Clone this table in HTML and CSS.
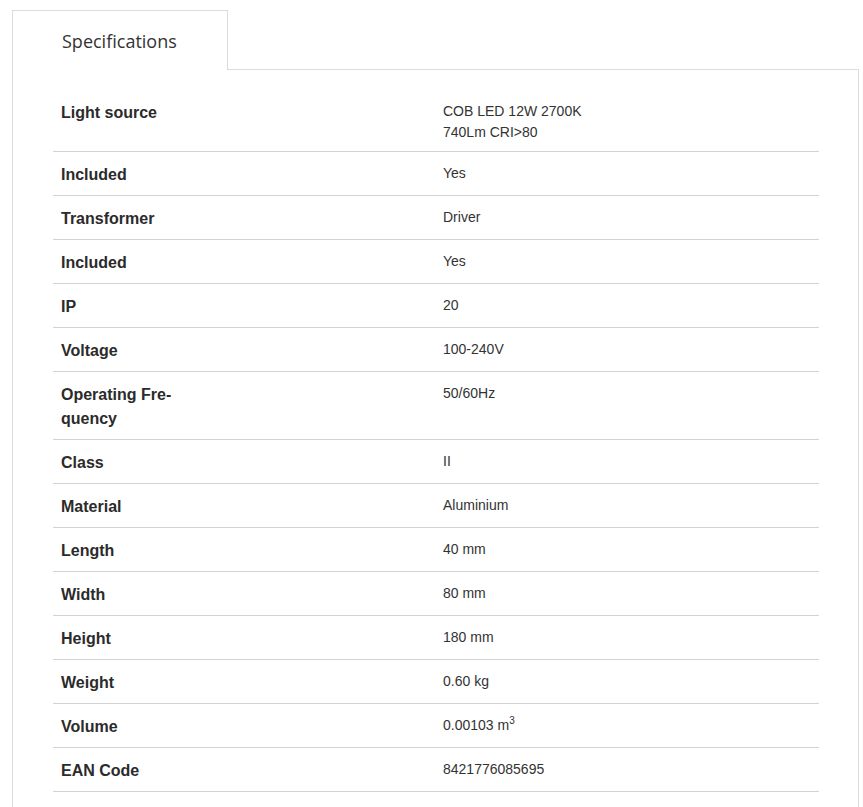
FILE: index.html
```html
<!DOCTYPE html>
<html lang="en">
<head>
<meta charset="utf-8">
<title>Specifications</title>
<link rel="stylesheet" href="styles.css">
</head>
<body>
<div class="tabs">
  <div class="tab-row">
    <div class="tab">Specifications</div>
    <div class="tab-fill"></div>
  </div>
  <div class="panel">
    <table class="specs">
      <tr><th>Light source</th><td>COB LED 12W 2700K<br>740Lm CRI&gt;80</td></tr>
      <tr><th>Included</th><td>Yes</td></tr>
      <tr><th>Transformer</th><td>Driver</td></tr>
      <tr><th>Included</th><td>Yes</td></tr>
      <tr><th>IP</th><td>20</td></tr>
      <tr><th>Voltage</th><td>100-240V</td></tr>
      <tr><th><span class="lbl">Operating Fre&shy;quency</span></th><td>50/60Hz</td></tr>
      <tr><th>Class</th><td>II</td></tr>
      <tr><th>Material</th><td>Aluminium</td></tr>
      <tr><th>Length</th><td>40 mm</td></tr>
      <tr><th>Width</th><td>80 mm</td></tr>
      <tr><th>Height</th><td>180 mm</td></tr>
      <tr><th>Weight</th><td>0.60 kg</td></tr>
      <tr><th>Volume</th><td>0.00103 m<sup>3</sup></td></tr>
      <tr><th>EAN Code</th><td>8421776085695</td></tr>
    </table>
  </div>
</div>
</body>
</html>
```

FILE: styles.css
```css
html, body {
  margin: 0;
  padding: 0;
  background: #fff;
}

.tabs {
  margin: 10px 0 0 12px;
  width: 847px;
}

.tab-row {
  display: flex;
  height: 60px;
}

.tab {
  box-sizing: border-box;
  width: 216px;
  height: 60px;
  border: 1px solid #dcdcdc;
  border-bottom: none;
  padding: 18px 0 0 49px;
  font-family: "Open Sans", "Liberation Sans", sans-serif;
  font-size: 18px;
  line-height: 24px;
  color: #333;
}

.tab-fill {
  flex: 1;
  border-bottom: 1px solid #dcdcdc;
}

.panel {
  border-left: 1px solid #dcdcdc;
  border-right: 1px solid #dcdcdc;
  padding: 20px 0 40px 40px;
}

.specs {
  width: 766px;
  border-collapse: collapse;
  font-family: "Liberation Sans", Arial, sans-serif;
  color: #333;
}

.specs tr {
  border-bottom: 1px solid #d2d2d2;
}

.specs th {
  width: 366px;
  text-align: left;
  vertical-align: top;
  padding: 11px 8px 8px 8px;
  font-size: 16px;
  line-height: 24px;
  font-weight: bold;
  color: #2b2b2b;
}

.specs td {
  vertical-align: top;
  padding: 11px 8px 8px 8px;
  font-size: 14px;
  line-height: 21px;
}

.lbl {
  display: block;
  width: 125px;
}

.specs sup {
  font-size: 10px;
  line-height: 0;
  vertical-align: 6px;
}
```
